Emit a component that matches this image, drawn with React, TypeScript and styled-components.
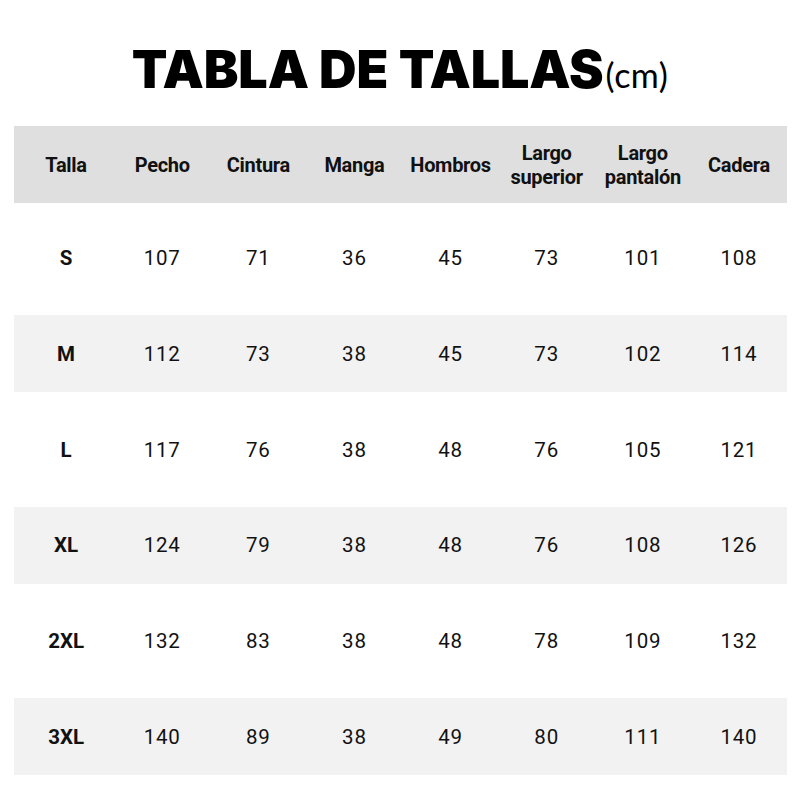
import React from "react";
import styled, { createGlobalStyle } from "styled-components";

const Global = createGlobalStyle`
  html, body { margin: 0; padding: 0; background: #ffffff; }
  body { width: 800px; height: 800px; overflow: hidden; }
`;

const Page = styled.div`
  width: 800px;
  height: 800px;
  background: #ffffff;
  display: flex;
  flex-direction: column;
  align-items: center;
`;

const Title = styled.h1`
  margin: 40px 0 0 0;
  height: 86px;
  display: flex;
  align-items: baseline;
  justify-content: center;
  font-family: Inter, "Open Sans", sans-serif;
  font-weight: 900;
  font-size: 52px;
  line-height: 60px;
  letter-spacing: -0.1px;
  color: #000;
`;

const Unit = styled.span`
  font-family: Lato, "Open Sans", sans-serif;
  font-weight: 400;
  font-size: 34px;
  letter-spacing: 0.5px;
  margin-left: 2px;
`;

const Table = styled.div`
  width: 773px;
  margin-left: 1px;
  display: flex;
  flex-direction: column;
  gap: 18.75px;
`;

const Row = styled.div<{ $shade: "head" | "odd" | "even" }>`
  height: 77px;
  padding-left: 4px;
  display: grid;
  grid-template-columns: repeat(8, 1fr);
  align-items: center;
  background: ${(p) =>
    p.$shade === "head" ? "#dfdfdf" : p.$shade === "odd" ? "#f2f2f2" : "#ffffff"};
`;

const HeadRow = styled(Row)`
  margin-bottom: -2.25px;
`;

const HeadCell = styled.div`
  text-align: center;
  font-family: Roboto, "Liberation Sans", sans-serif;
  font-weight: 700;
  font-size: 20px;
  line-height: 24px;
  letter-spacing: -0.3px;
  color: #111;
`;

const SizeCell = styled.div`
  text-align: center;
  font-family: Roboto, "Liberation Sans", sans-serif;
  font-weight: 700;
  font-size: 20.5px;
  color: #111;
`;

const NumCell = styled.div`
  text-align: center;
  font-family: Roboto, "Liberation Sans", sans-serif;
  font-weight: 400;
  font-size: 20.5px;
  letter-spacing: 0.8px;
  color: #111;
`;

const headers: React.ReactNode[] = [
  "Talla",
  "Pecho",
  "Cintura",
  "Manga",
  "Hombros",
  <>Largo<br />superior</>,
  <>Largo<br />pantalón</>,
  "Cadera",
];

const rows: [string, ...number[]][] = [
  ["S", 107, 71, 36, 45, 73, 101, 108],
  ["M", 112, 73, 38, 45, 73, 102, 114],
  ["L", 117, 76, 38, 48, 76, 105, 121],
  ["XL", 124, 79, 38, 48, 76, 108, 126],
  ["2XL", 132, 83, 38, 48, 78, 109, 132],
  ["3XL", 140, 89, 38, 49, 80, 111, 140],
];

export default function App() {
  return (
    <Page>
      <Global />
      <Title>
        TABLA DE TALLAS<Unit>(cm)</Unit>
      </Title>
      <Table>
        <HeadRow $shade="head">
          {headers.map((h, i) => (
            <HeadCell key={i}>{h}</HeadCell>
          ))}
        </HeadRow>
        {rows.map(([size, ...vals], i) => (
          <Row key={size} $shade={i % 2 === 1 ? "odd" : "even"}>
            <SizeCell>{size}</SizeCell>
            {vals.map((v, j) => (
              <NumCell key={j}>{v}</NumCell>
            ))}
          </Row>
        ))}
      </Table>
    </Page>
  );
}
